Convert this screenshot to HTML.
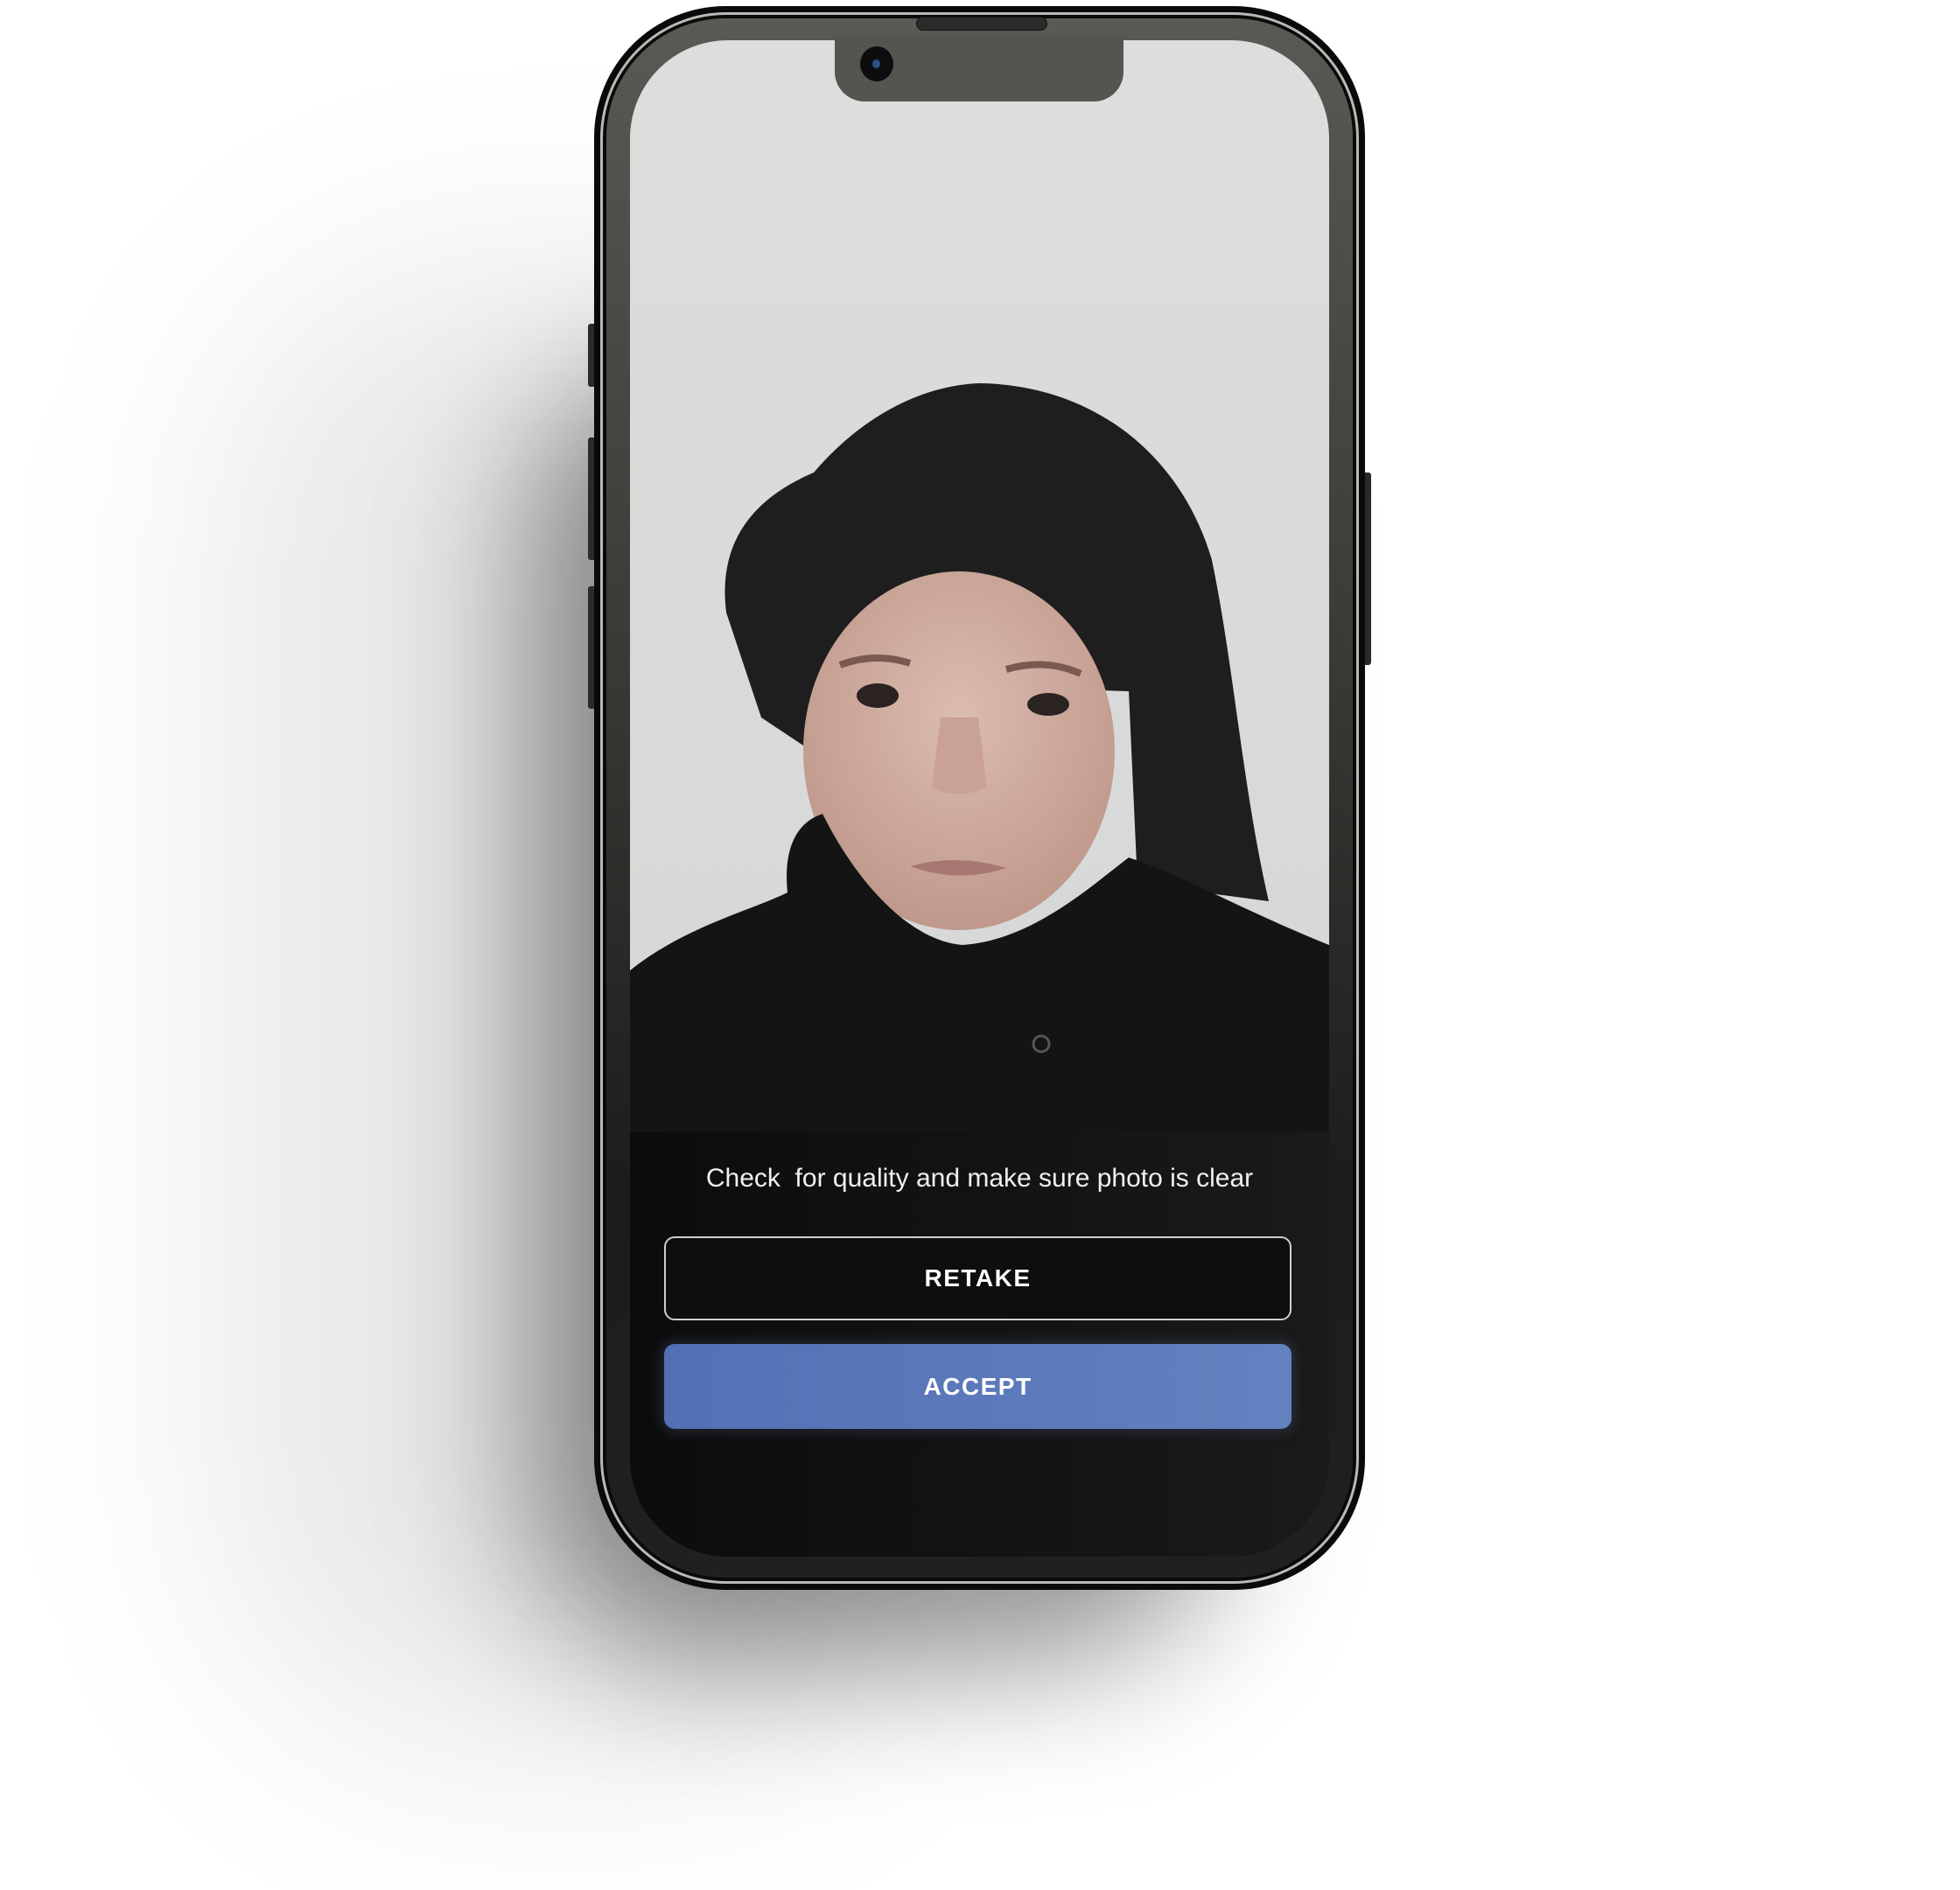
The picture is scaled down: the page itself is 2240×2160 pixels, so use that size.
<!DOCTYPE html>
<html><head><meta charset="utf-8"><style>
html,body{margin:0;padding:0;width:2240px;height:2160px;background:#fff;overflow:hidden;font-family:"Liberation Sans",sans-serif}
.abs{position:absolute}
#shadow{left:600px;top:420px;width:800px;height:1480px;border-radius:200px;background:rgba(0,0,0,.42);filter:blur(80px)}
#shadow2{left:250px;top:300px;width:800px;height:1700px;border-radius:300px;background:rgba(0,0,0,.09);filter:blur(120px)}
#phone{left:679px;top:7px;width:881px;height:1810px;border-radius:150px;background:#0a0a0a}
#ring{left:686px;top:14px;width:867px;height:1796px;border-radius:144px;border:3px solid #b9b9b5;box-sizing:border-box}
#bezel{left:693px;top:21px;width:853px;height:1782px;border-radius:136px;background:linear-gradient(180deg,#5a5a54 0%,#3a3a36 40%,#1c1c1c 75%,#202020 100%)}
#screen{left:720px;top:46px;width:799px;height:1733px;border-radius:112px;overflow:hidden;background:linear-gradient(90deg,#0b0b0b,#151515 60%,#1c1c1c)}
#notch{left:954px;top:40px;width:330px;height:76px;background:#55554f;border-radius:0 0 34px 34px}
#spk{left:1047px;top:19px;width:148px;height:14px;border-radius:8px;background:#2b2b2b;border:1px solid #111}
#cam{left:983px;top:53px;width:38px;height:40px;border-radius:50%;background:#0d0d10}
#cam i{position:absolute;left:14px;top:15px;width:9px;height:10px;border-radius:50%;background:#2b4f88}
.btn{position:absolute;left:759px;width:717px;box-sizing:border-box;border-radius:12px;color:#fff;font-weight:bold;font-size:28px;letter-spacing:1.5px;text-align:center}
</style></head><body>
<div class="abs" id="shadow2"></div>
<div class="abs" id="shadow"></div>
<div class="abs" style="left:672px;top:370px;width:10px;height:72px;background:#2a2a2a;border-radius:3px"></div>
<div class="abs" style="left:672px;top:500px;width:10px;height:140px;background:#2a2a2a;border-radius:3px"></div>
<div class="abs" style="left:672px;top:670px;width:10px;height:140px;background:#2a2a2a;border-radius:3px"></div>
<div class="abs" style="left:1557px;top:540px;width:10px;height:220px;background:#2a2a2a;border-radius:3px"></div>
<div class="abs" id="phone"></div>
<div class="abs" id="ring"></div>
<div class="abs" id="bezel"></div>
<div class="abs" id="screen">
<svg width="799" height="1733" viewBox="720 46 799 1733" style="position:absolute;left:0;top:0">
<defs>
<linearGradient id="bg" x1="0" y1="0" x2="0" y2="1"><stop offset="0" stop-color="#dcdedd"/><stop offset="1" stop-color="#d6d8d7"/></linearGradient>
<radialGradient id="sk" cx=".5" cy=".4" r=".6"><stop offset="0" stop-color="#dcbcb0"/><stop offset="1" stop-color="#bf988b"/></radialGradient>
<linearGradient id="dk" x1="0" x2="1"><stop offset="0" stop-color="#0c0c0c"/><stop offset=".6" stop-color="#141414"/><stop offset="1" stop-color="#1a1a1a"/></linearGradient>
</defs>
<rect x="720" y="46" width="799" height="1250" fill="url(#bg)"/>
<path d="M830,700 C820,620 860,570 930,540 C990,470 1060,440 1120,438 C1250,440 1350,520 1385,640 C1410,760 1420,900 1450,1030 L1300,1010 L1290,790 L960,780 L930,860 L870,820 Z" fill="#1e1e1e"/>
<ellipse cx="1096" cy="858" rx="178" ry="205" fill="url(#sk)"/>
<path d="M925,700 C960,630 1060,600 1180,615 C1250,630 1280,690 1285,750 L1280,690 C1250,600 1150,575 1060,590 C990,600 945,640 925,700Z" fill="#1e1e1e"/>
<path d="M960,760 Q1000,745 1040,758" stroke="#7a5a50" stroke-width="8" fill="none"/>
<path d="M1150,765 Q1195,752 1235,770" stroke="#7a5a50" stroke-width="8" fill="none"/>
<ellipse cx="1003" cy="795" rx="24" ry="14" fill="#2a2322"/>
<ellipse cx="1198" cy="805" rx="24" ry="13" fill="#2a2322"/>
<path d="M1075,820 L1065,900 Q1093,915 1128,900 L1118,820" fill="#c9a295"/>
<path d="M1040,990 Q1095,975 1150,992 Q1095,1010 1040,990Z" fill="#a67770"/>
<path d="M719,1110 C780,1060 860,1040 900,1020 C895,970 910,940 940,930 C980,1010 1040,1075 1100,1080 C1180,1075 1250,1010 1290,980 C1350,1000 1420,1040 1519,1080 L1519,1296 L719,1296 Z" fill="#141414"/>
<circle cx="1190" cy="1193" r="9" fill="none" stroke="#555" stroke-width="3"/>
<rect x="720" y="1294" width="799" height="490" fill="url(#dk)"/>
</svg>
<div style="position:absolute;left:0;top:1284px;width:799px;text-align:center;color:#f0f0f0;font-size:30px">Check&nbsp; for quality and make sure photo is clear</div>
</div>
<div class="btn" style="top:1413px;height:96px;line-height:92px;border:2px solid #cfcfcf;background:#0e0e0e">RETAKE</div>
<div class="btn" style="top:1536px;height:97px;line-height:97px;background:linear-gradient(90deg,#5270b4,#6482c0);box-shadow:0 0 14px 4px rgba(90,110,160,.25)">ACCEPT</div>
<div class="abs" id="notch"></div>
<div class="abs" id="spk"></div>
<div class="abs" id="cam"><i></i></div>
</body></html>
